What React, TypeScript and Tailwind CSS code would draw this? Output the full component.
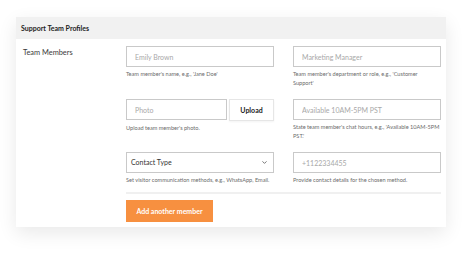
import { ChevronDown } from "lucide-react";

const inputBox =
  "block h-[21px] border border-[#c9c9c9] bg-white px-[8px] text-[7px] text-[#333] placeholder:text-[#a8a8a8] outline-none";

function Help({ children, className = "" }: { children: React.ReactNode; className?: string }) {
  return (
    <p className={`mt-[2px] text-[5.6px] leading-[9px] text-[#6b6b6b] ${className}`}>
      {children}
    </p>
  );
}

export default function App() {
  return (
    <div className="h-[253px] w-[470px] bg-white pl-[16px] pt-[17px] font-['Lato',sans-serif] text-[#222]">
      <div className="w-[430px] bg-white shadow-[0_6px_18px_rgba(0,0,0,0.09)]">
        <div className="flex h-[22px] items-center bg-[#f1f1f1] px-[5px] text-[7px] font-bold text-[#1d1d1d]">
          Support Team Profiles
        </div>

        <div className="flex pb-[5px] pt-[7px]">
          <div className="w-[110px] pl-[7px] pt-[2px] text-[7.4px] leading-[10px] text-[#3a3a3a]">
            Team Members
          </div>

          <div className="w-[315px]">
            <div className="grid grid-cols-[148px_148px] grid-rows-[53px_53px_auto] gap-x-[19px]">
              <div>
                <input className={`${inputBox} w-full`} placeholder="Emily Brown" />
                <Help>Team member's name, e.g., 'Jane Doe'</Help>
              </div>
              <div>
                <input className={`${inputBox} w-full`} placeholder="Marketing Manager" />
                <Help className="max-w-[140px]">Team member's department or role, e.g., 'Customer Support'</Help>
              </div>

              <div>
                <div className="flex gap-[2px]">
                  <input className={`${inputBox} w-[101px] shrink-0`} placeholder="Photo" />
                  <button className="flex h-[22px] w-[45px] items-center justify-center border border-[#e6e6e6] bg-white text-[7px] font-bold text-[#222] shadow-[0_1px_2px_rgba(0,0,0,0.05)]">
                    Upload
                  </button>
                </div>
                <Help>Upload team member's photo.</Help>
              </div>
              <div>
                <input className={`${inputBox} w-full`} placeholder="Available 10AM-5PM PST" />
                <Help className="w-[152px]">State team member's chat hours, e.g., 'Available 10AM-5PM PST.'</Help>
              </div>

              <div>
                <div className="flex h-[21px] items-center justify-between border border-[#c9c9c9] bg-white pl-[4px] pr-[5px] text-[7px] text-[#333]">
                  <span>Contact Type</span>
                  <ChevronDown className="h-[7px] w-[7px] text-[#444]" strokeWidth={2.5} />
                </div>
                <Help>Set visitor communication methods, e.g., WhatsApp, Email.</Help>
              </div>
              <div>
                <input className={`${inputBox} w-full`} placeholder="+1122334455" />
                <Help>Provide contact details for the chosen method.</Help>
              </div>
            </div>

            <div className="mt-[8px] h-[2px] w-[315px] bg-[#f0f0f0]" />

            <button className="mt-[6px] flex h-[22px] w-[87px] items-center justify-center bg-[#f79040] text-[7px] font-bold text-white">
              Add another member
            </button>
          </div>
        </div>
      </div>
    </div>
  );
}
